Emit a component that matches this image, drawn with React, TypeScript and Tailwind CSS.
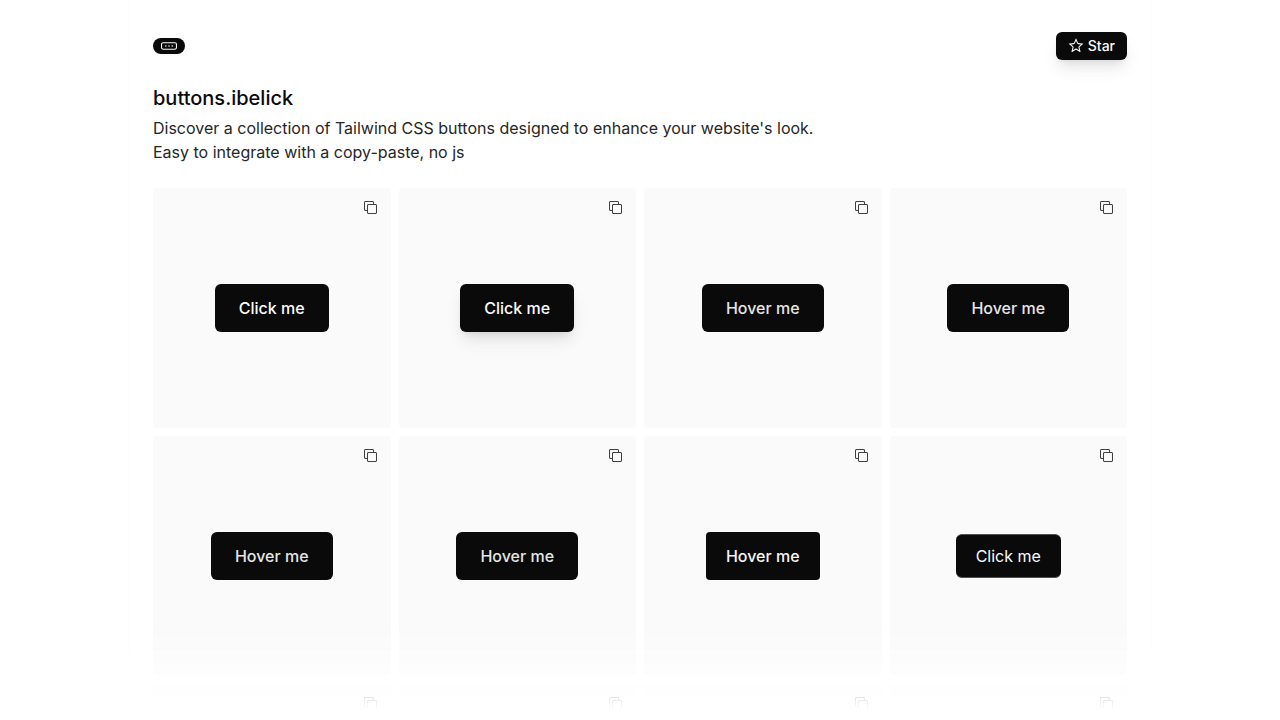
import { RxButton, RxCopy, RxStar } from "react-icons/rx";

type Sample = { label?: string; style?: string };

const base = "inline-flex items-center justify-center bg-neutral-950 ";

const solid = base + "h-12 rounded-md px-6 font-medium text-neutral-50";
const raised = solid + " shadow-lg shadow-neutral-500/20";
const muted = base + "h-12 rounded-md px-6 font-medium text-neutral-200";
const compact = base + "h-12 rounded-sm px-5 font-medium text-neutral-100";
const outlined =
  base + "h-11 rounded-md border-y border-neutral-600 px-5 text-neutral-50";

const samples: Sample[] = [
  { label: "Click me", style: solid },
  { label: "Click me", style: raised },
  { label: "Hover me", style: muted },
  { label: "Hover me", style: muted },
  { label: "Hover me", style: muted },
  { label: "Hover me", style: muted },
  { label: "Hover me", style: compact },
  { label: "Click me", style: outlined },
  {},
  {},
  {},
  {},
];

function Card({ label, style }: Sample) {
  return (
    <li className="relative flex h-60 items-center justify-center rounded-sm bg-neutral-50">
      <button type="button" aria-label="Copy code" className="absolute top-3 right-3 px-px text-neutral-700">
        <RxCopy size={15} />
      </button>
      {label && (
        <button type="button" className={style}>
          {label}
        </button>
      )}
    </li>
  );
}

export default function App() {
  return (
    <div className="min-h-screen bg-white font-['Inter',sans-serif] text-neutral-950 antialiased">
      <main className="mx-auto max-w-5xl border-x border-neutral-50/40 px-6 py-8">
        <header className="flex items-center justify-between">
          <a
            href="#top"
            aria-label="Home"
            className="flex h-4 w-8 items-center justify-center rounded-full bg-neutral-950 text-neutral-50"
          >
            <RxButton size={16} />
          </a>
          <a
            href="#star"
            className="flex h-7 items-center gap-1 rounded-md bg-neutral-950 px-3 text-sm font-medium text-neutral-50 shadow-lg shadow-neutral-500/20"
          >
            <RxStar size={16} />
            Star
          </a>
        </header>
        <h1 className="mt-6 text-xl font-medium">buttons.ibelick</h1>
        <p className="mt-1 text-neutral-800">
          Discover a collection of Tailwind CSS buttons designed to enhance your website's look.
          <br />
          Easy to integrate with a copy-paste, no js
        </p>
        <ul className="mt-6 grid grid-cols-4 gap-2">
          {samples.map((sample, index) => (
            <Card key={index} {...sample} />
          ))}
        </ul>
      </main>
      <div className="pointer-events-none fixed inset-x-0 bottom-0 h-25 bg-linear-to-t from-white from-10% to-transparent" />
    </div>
  );
}
